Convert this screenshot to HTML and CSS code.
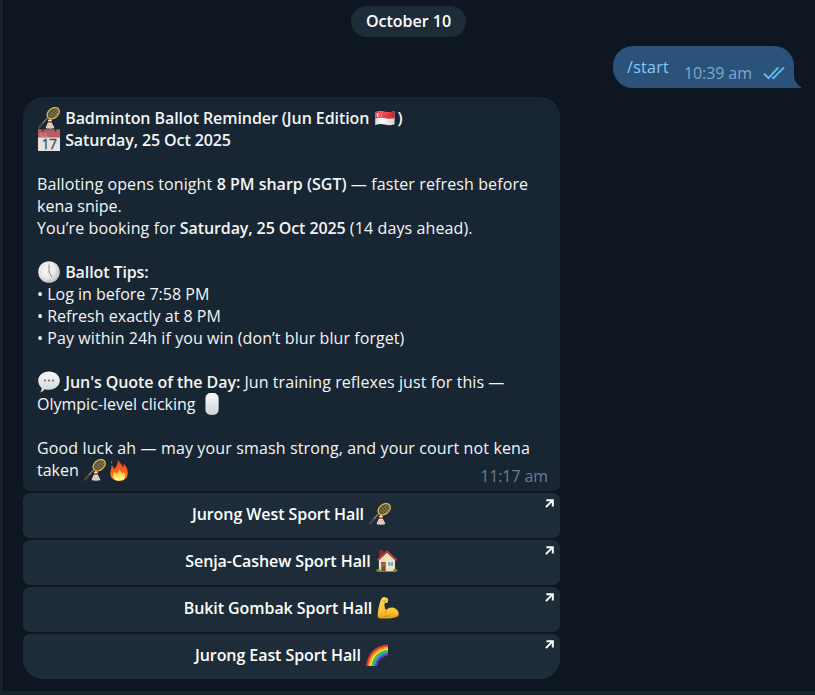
FILE: index.html
```html
<!DOCTYPE html>
<html lang="en">
<head>
<meta charset="utf-8">
<title>Chat</title>
<link rel="stylesheet" href="styles.css">
</head>
<body>
<svg class="defs" aria-hidden="true">
  <defs>
    <linearGradient id="gPearl" x1="0" y1="0" x2="0" y2="1"><stop offset="0" stop-color="#fbfbfc"/><stop offset="1" stop-color="#cdd3d8"/></linearGradient>
    <radialGradient id="gDial" cx=".42" cy=".4" r=".6"><stop offset="0" stop-color="#f6f6f6"/><stop offset=".6" stop-color="#e9e9ea"/><stop offset="1" stop-color="#bfc1c3"/></radialGradient>
    <linearGradient id="gFlame" x1="0" y1="0" x2="0" y2="1"><stop offset="0" stop-color="#f5401b"/><stop offset=".65" stop-color="#fb6a1c"/><stop offset="1" stop-color="#ffa02b"/></linearGradient>
    <linearGradient id="gFlameIn" x1="0" y1="0" x2="0" y2="1"><stop offset="0" stop-color="#ffa32b"/><stop offset=".6" stop-color="#ffe04a"/><stop offset="1" stop-color="#fffbd0"/></linearGradient>
    <linearGradient id="gArm" x1="0" y1="0" x2="0" y2="1"><stop offset="0" stop-color="#ffd968"/><stop offset=".7" stop-color="#fbc232"/><stop offset="1" stop-color="#e49a17"/></linearGradient>
    <linearGradient id="gFlagR" x1="0" y1="0" x2="1" y2="0"><stop offset="0" stop-color="#e2414a"/><stop offset=".35" stop-color="#ef4f55"/><stop offset="1" stop-color="#c9242f"/></linearGradient>
    <linearGradient id="gFlagW" x1="0" y1="0" x2="1" y2="0"><stop offset="0" stop-color="#d9d9dc"/><stop offset=".35" stop-color="#ffffff"/><stop offset="1" stop-color="#cfcfd3"/></linearGradient>
  </defs>
  <symbol id="racket" viewBox="0 0 22 22">
    <path d="M.9 20.6 5.3 15.5" stroke="#4d4544" stroke-width="2.4" stroke-linecap="round"/>
    <path d="M5 15.8 9.8 10.6" stroke="#8d8266" stroke-width="1.3"/>
    <ellipse cx="15.2" cy="6.2" rx="6.7" ry="4.9" transform="rotate(-39 15.2 6.2)" fill="#554d35" stroke="#d9b845" stroke-width="1.3"/>
    <path d="M10.8 6.3 16 11M12.2 4.4 18 9.5M14.2 2.8 19.8 7.6M16.7 1.8 20.7 5.2M10.5 9.5 18.3 2M12.2 11 20.5 3.2M15.2 10.9 20.6 5.8" stroke="#a99c68" stroke-width=".5"/>
    <path d="M10.1 15.2h3.5l2.7 5.3-1.3 1.3-1.5-.6-1.5.7-1.6-.7-1.4.6-1.4-1.2z" fill="#e8dfc8"/>
    <path d="m10.6 17-1.2 4m2.6-4v4.5m1.3-4.5 1.3 4" stroke="#ada48d" stroke-width=".6"/>
    <path d="M9.9 14.5q0-2.3 2-2.3t2 2.3z" fill="#f7f3e8"/><path d="M9.8 14.3h4.2v1.5H9.8z" fill="#d33b38"/>
  </symbol>
  <symbol id="flag" viewBox="0 0 22 22">
    <path d="M1.2 5.2Q5.5 3.5 10.3 4.8T20.6 4.2v13.1Q16 19 10.8 17.6T1.2 18.2z" fill="url(#gFlagW)"/>
    <path d="M1.2 5.2Q5.5 3.5 10.3 4.8T20.6 4.2v6.9Q16 12.5 10.8 11.2T1.2 11.8z" fill="url(#gFlagR)"/>
    <path d="M5 6a1.9 1.9 0 1 0 0 3.7 2.2 2.2 0 0 1 0-3.7" fill="#fff"/>
    <g fill="#ffc4c6"><circle cx="6.5" cy="6.5" r=".4"/><circle cx="7.7" cy="7.5" r=".4"/><circle cx="7.2" cy="8.9" r=".4"/><circle cx="5.8" cy="8.9" r=".4"/><circle cx="5.4" cy="7.5" r=".4"/></g>
  </symbol>
  <symbol id="clock" viewBox="0 0 22 22">
    <circle cx="11" cy="11" r="10.8" fill="url(#gDial)"/>
    <path d="M11 2.4v1M11 18.500v1M2.400 11h1M18.500 11h1" stroke="#a6a8aa" stroke-width=".6"/>
    <path d="M11 3.800V11l3 5.200" fill="none" stroke="#77797b" stroke-width=".9"/>
  </symbol>
  <symbol id="speech" viewBox="0 0 22 22">
    <path d="M11 .5c6 0 10.8 3.9 10.8 9.1S17 18.8 11 18.8q-2.2 0-4.2-.6-1.7 2.4-4.4 3.2 1.2-2 1.3-4.5C1.6 15.2.2 12.7.2 9.6.2 4.4 5 .5 11 .5z" fill="url(#gPearl)"/>
    <g fill="#55585b"><circle cx="7" cy="9.5" r=".9"/><circle cx="11" cy="9.5" r=".9"/><circle cx="15" cy="9.5" r=".9"/></g>
  </symbol>
  <symbol id="mouse" viewBox="0 0 22 22"><rect x="4.600" y=".1" width="12.900" height="21.700" rx="5" fill="url(#gPearl)"/><rect x="4.900" y=".4" width="12.300" height="21.100" rx="4.800" fill="none" stroke="#fff" stroke-opacity=".5" stroke-width=".6"/></symbol>
  <symbol id="fire" viewBox="0 0 22 22">
    <path d="M9.600 0c.3 2.500 4.700 4.700 5.400 8.800.8-1 .8-2.700.4-4.200 2.600 2 4.400 5.400 4.400 9.200 0 5.200-3.500 8.200-8.600 8.200-5.300 0-8.900-3-8.900-7.700 0-3 1.500-5 1.300-8.100 1.400.8 2.400 2.200 2.600 4C8.500 7.800 10.400 4 9.600 0z" fill="url(#gFlame)"/>
    <path d="M3.400 1.600q1.900 1.600.3 3.500-1.400-1.500-.3-3.500z" fill="#ef4a20"/>
    <path d="M11.300 9.500c.2 2.500 2.500 3.200 2.700 5.300.8-.5 1.100-1.500 1.100-2.600 1.500 1.500 2.200 3.200 2 5.100-.3 2.700-2.600 4.300-5.900 4.300-3.500 0-6-1.600-6.100-4.300-.1-1.800.9-3 1.100-4.800 1 .7 1.500 1.600 1.600 2.600 1.800-1.200 3.300-3 3.500-5.600z" fill="url(#gFlameIn)"/>
  </symbol>
  <symbol id="house" viewBox="0 0 22 22">
    <path d="M3.300.4h4.200v7H3.300z" fill="#8f2d2a"/><path d="M2.900 10 11 2.500l8.100 7.500v11H2.900z" fill="#f4dfba"/>
    <path d="M1.900 9.700 11 1.300l9.100 8.400" fill="none" stroke="#bd3b35" stroke-width="1.800" stroke-linecap="round"/>
    <path d="M5.200 12h4.500v9H5.200z" fill="#8c4a32"/><path d="M6.200 13.200h2.500v3H6.200z" fill="#5c83a0"/>
    <path d="M11.500 11.600h6.200v4.800h-6.200z" fill="#fffaf0"/><path d="M12.100 12.100h5v3.800h-5z" fill="#58a7da"/><path d="M14.600 12v4" stroke="#e9f2f8" stroke-width=".6"/>
    <ellipse cx="2.500" cy="20.400" rx="2.200" ry="1.400" fill="#6b9b39"/><ellipse cx="19.100" cy="20.400" rx="2.200" ry="1.400" fill="#6b9b39"/><path d="M3 21h16v.8H3z" fill="#a58e74"/>
  </symbol>
  <symbol id="arm" viewBox="0 0 22 22">
    <path d="M5.200.7C7.500-.2 11 .6 11.200 2.600c.1 1.500-.4 2.900-1.600 3.300L7.700 5.700c-.5 2.400-.2 4.400.6 6.200.3.700.9 1 1.500.6 1.600-1.900 5-2.700 7.600-1.600 2.700 1.100 4.300 3.400 4.300 5.800 0 1.800-.7 2.600-2.500 3.300-3.300 1.300-6.700 1.600-10.300 1.600-3 0-5.400.1-7.100-.5C.6 20.600.5 19 .8 16.800 1.300 12.200 2 7.700 3.700 3z" fill="url(#gArm)"/>
    <path d="M5 3.400q1.500 1.800 3 1.300l.4-1.900 1.700.4M9.600 12.600q-1.300 1.400-1.200 3M7 19.300q4.300.8 6.500-2.200" fill="none" stroke="#c88018" stroke-width=".75" stroke-linecap="round"/>
  </symbol>
  <symbol id="rainbow" viewBox="0 0 22 22">
    <g fill="none" stroke-width="2.100">
      <path d="M1.100 22Q3.500 3.300 22 1.300" stroke="#f0302b"/><path d="M2.900 22Q5.200 5.200 22 3.200" stroke="#ff9420"/><path d="M4.700 22Q7 7.100 22 5" stroke="#ffe53b"/><path d="M6.500 22Q8.700 8.800 22 6.900" stroke="#42c83d"/><path d="M8.200 22Q10.300 10.600 22 8.700" stroke="#2a9df0"/><path d="M9.800 22Q11.700 12.300 22 10.300" stroke="#7139cf"/>
    </g>
  </symbol>
  <symbol id="out" viewBox="0 0 10 10"><path d="M1.500 1.300H8.700v7M8.700 1.300 1 9" fill="none" stroke="#fff" stroke-width="2.200"/></symbol>
</svg>
<main class="chat">
  <div class="date">October 10</div>
  <div class="sent">
    <span class="command">/start</span><span class="sent-time">10:39 am</span>
    <svg class="checks" viewBox="0 0 22 14"><path d="m1 7.500 4.500 4.600L15.300 1.300M9.300 11l1.100 1.100L21 1.300" fill="none" stroke="#65b9f4" stroke-width="1.800"/></svg>
    <svg class="tail" viewBox="0 0 7 20"><path d="M0 0v20h7v-1Q0 15 0 7z" fill="#2b5278"/></svg>
  </div>
  <section class="received">
    <article class="message">
      <p><svg class="emoji"><use href="#racket"/></svg> <b class="title">Badminton Ballot Reminder (Jun Edition <svg class="emoji"><use href="#flag"/></svg>)</b></p>
      <p><svg class="emoji" viewBox="0 0 22 22">
        <path d="M0 0h22v22H0z" fill="#e3e3e3"/><path d="M0 0h22v8.500H0z" fill="#b85c60"/><path d="M0 0h22v1H0z" fill="#964749"/>
        <circle cx="4.700" cy="1.400" r="1.100" fill="#4f2a2d"/><circle cx="17.400" cy="1.400" r="1.100" fill="#4f2a2d"/>
        <text x="1.300" y="7.800" class="cal-month">JUL</text><text x="11" y="19.700" class="cal-day">17</text>
      </svg> <b>Saturday, 25 Oct 2025</b></p>
      <p class="gap wide">Balloting opens tonight <b class="even">8 PM sharp (SGT)</b> — faster refresh before</p>
      <p>kena snipe.</p>
      <p class="wide">You’re booking for <b>Saturday, 25 Oct 2025</b> (14 days ahead).</p>
      <p class="gap"><svg class="emoji"><use href="#clock"/></svg> <b>Ballot Tips:</b></p>
      <p>• Log in before 7:58 PM</p>
      <p class="slight">• Refresh exactly at 8 PM</p>
      <p class="medium">• Pay within 24h if you win (don’t blur blur forget)</p>
      <p class="gap medium"><svg class="emoji"><use href="#speech"/></svg> <b class="title">Jun's Quote of the Day:</b> Jun training reflexes just for this —</p>
      <p>Olympic-level clicking <svg class="emoji"><use href="#mouse"/></svg></p>
      <p class="gap wider">Good luck ah — may your smash strong, and your court not kena</p>
      <p>taken <svg class="emoji"><use href="#racket"/></svg><svg class="emoji"><use href="#fire"/></svg></p>
      <time class="time">11:17 am</time>
    </article>
    <a class="venue">Jurong West Sport Hall <svg class="emoji"><use href="#racket"/></svg><svg class="out"><use href="#out"/></svg></a>
    <a class="venue">Senja-Cashew Sport Hall <svg class="emoji"><use href="#house"/></svg><svg class="out"><use href="#out"/></svg></a>
    <a class="venue">Bukit Gombak Sport Hall <svg class="emoji"><use href="#arm"/></svg><svg class="out"><use href="#out"/></svg></a>
    <a class="venue">Jurong East Sport Hall <svg class="emoji"><use href="#rainbow"/></svg><svg class="out"><use href="#out"/></svg></a>
  </section>
</main>
</body>
</html>
```
FILE: styles.css
```css
* { box-sizing: border-box; }
body { margin: 0; background: #17212b; font: 16px/22px "Open Sans", sans-serif; color: #f5f5f5; }
.defs { position: absolute; width: 0; height: 0; }
.chat { display: flex; flex-direction: column; width: 812px; height: 691px; margin-left: 3px; padding: 6px 18px 0 19px; background: #0e1621; border-left: 1px solid #0a121b; border-bottom: 1px solid #0a121b; }
.date { align-self: flex-start; margin-left: 328px; width: 115px; height: 31px; border-radius: 16px; background: #1e2c3a; line-height: 30px; text-align: center; font-weight: 600; color: #fff; }
.sent { position: relative; display: flex; align-self: flex-end; width: 181px; height: 42px; margin: 9px 3px 0 0; padding-left: 14px; border-radius: 20px 20px 0 20px; background: #2b5278; }
.command { width: 57px; line-height: 42px; letter-spacing: .3px; color: #83caff; }
.sent-time { width: 79px; padding-top: 16px; letter-spacing: -.1px; color: #7da8d3; white-space: nowrap; }
.checks { width: 22px; height: 14px; margin-top: 20px; }
.tail { position: absolute; left: 181px; bottom: 0; width: 7px; height: 20px; }
.received { display: flex; flex-direction: column; gap: 2px; width: 537px; margin-top: 9px; }
.message { position: relative; height: 394px; padding: 10px 14px; border-radius: 20px 20px 7px 7px; background: #182533; }
p { margin: 0; height: 22px; white-space: nowrap; }
.gap { margin-top: 22px; }
.slight { letter-spacing: .02px; }
.medium { letter-spacing: .075px; }
.wide { letter-spacing: .115px; }
.wider { letter-spacing: .135px; }
b { font-weight: 600; letter-spacing: -.1px; }
.title { letter-spacing: -.075px; }
.even { letter-spacing: 0; }
.emoji { width: 22px; height: 22px; margin: 0 1px; vertical-align: top; }
.cal-month { font: 600 5.5px "Open Sans", sans-serif; letter-spacing: 0; fill: #d99698; }
.cal-day { font: 14px "Open Sans", sans-serif; letter-spacing: -.5px; fill: #4b4b4d; stroke: #4b4b4d; stroke-width: .3px; text-anchor: middle; }
.time { position: absolute; right: 12px; bottom: 4px; letter-spacing: -.1px; color: #6d7f8f; }
.venue { position: relative; height: 45px; padding: 10px 0 0 1px; border-radius: 7px; background: #1e2c3a; text-align: center; font-weight: 600; letter-spacing: -.07px; color: #fff; }
.venue:last-child { border-radius: 7px 7px 20px 20px; }
.out { position: absolute; right: 6px; top: 6px; width: 9px; height: 9px; }
```
